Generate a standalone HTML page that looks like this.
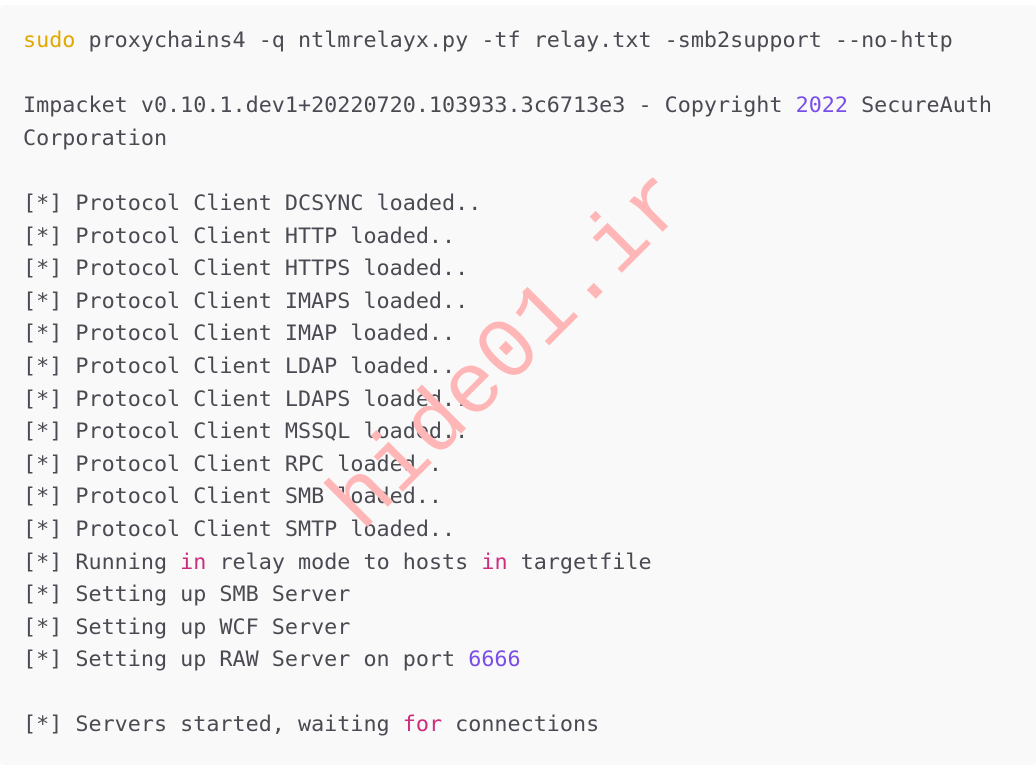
<!DOCTYPE html>
<html><head><style>
html,body{margin:0;padding:0;background:#fff;width:1036px;height:743px;overflow:hidden}
.box{position:absolute;left:0;top:5px;width:1036px;height:760px;background:#f9f9f9;border-radius:4px}
pre{position:absolute;left:23px;top:25px;margin:0;font-family:"DejaVu Sans Mono",monospace;font-size:21.75px;line-height:32.6px;color:#4a4a52;white-space:pre}
.y{color:#e0a800}.p{color:#7a4ee8}.m{color:#cc2e7d}
.wm{position:absolute;left:510px;top:352px;transform:translate(-50%,-50%) rotate(-45deg);font-family:"Liberation Mono",monospace;font-size:86px;color:#ffb6b6;white-space:nowrap}
</style></head><body>
<div class="box"></div>
<pre><span class="y">sudo</span> proxychains4 -q ntlmrelayx.py -tf relay.txt -smb2support --no-http

Impacket v0.10.1.dev1+20220720.103933.3c6713e3 - Copyright <span class="p">2022</span> SecureAuth
Corporation

[*] Protocol Client DCSYNC loaded..
[*] Protocol Client HTTP loaded..
[*] Protocol Client HTTPS loaded..
[*] Protocol Client IMAPS loaded..
[*] Protocol Client IMAP loaded..
[*] Protocol Client LDAP loaded..
[*] Protocol Client LDAPS loaded..
[*] Protocol Client MSSQL loaded..
[*] Protocol Client RPC loaded..
[*] Protocol Client SMB loaded..
[*] Protocol Client SMTP loaded..
[*] Running <span class="m">in</span> relay mode to hosts <span class="m">in</span> targetfile
[*] Setting up SMB Server
[*] Setting up WCF Server
[*] Setting up RAW Server on port <span class="p">6666</span>

[*] Servers started, waiting <span class="m">for</span> connections</pre>
<div class="wm">hide01.ir</div>
</body></html>
